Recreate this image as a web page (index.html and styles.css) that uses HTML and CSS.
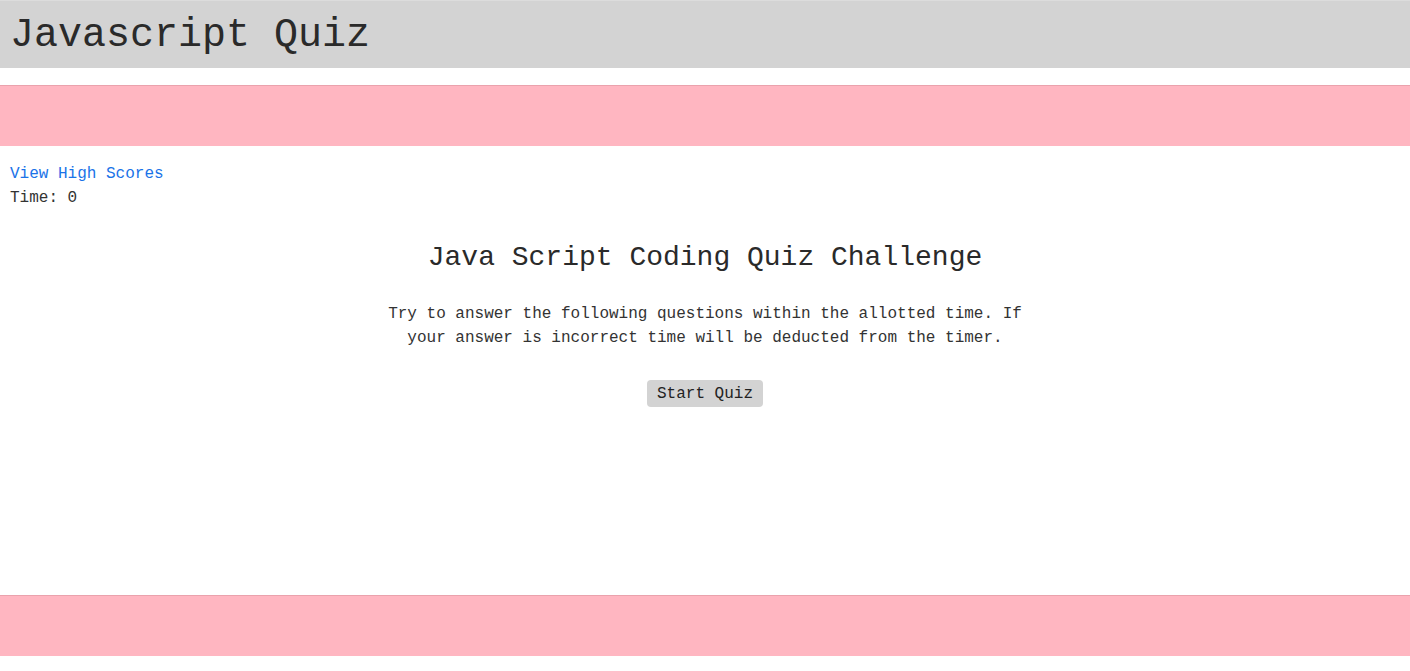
FILE: index.html
```html
<!DOCTYPE html>
<html lang="en">
<head>
<meta charset="utf-8">
<title>Javascript Quiz</title>
<link rel="stylesheet" href="styles.css">
</head>
<body>
<header class="site-header">
  <h1 class="site-title">Javascript Quiz</h1>
</header>
<div class="pink-bar"></div>
<nav class="status">
  <a class="scores-link" href="#">View High Scores</a>
  <div class="timer">Time: 0</div>
</nav>
<main class="quiz">
  <h2 class="quiz-title">Java Script Coding Quiz Challenge</h2>
  <p class="quiz-intro">Try to answer the following questions within the allotted time. If your answer is incorrect time will be deducted from the timer.</p>
  <button class="start-btn" type="button">Start Quiz</button>
</main>
<footer class="pink-bar"></footer>
</body>
</html>
```
FILE: styles.css
```css
html, body {
  margin: 0;
  padding: 0;
  background: #ffffff;
}
body {
  font-family: "Liberation Mono", "Courier New", monospace;
  color: #333333;
}
.site-header {
  height: 68px;
  background: #d3d3d3;
  border-top: 1px solid #dcdcdc;
  box-sizing: border-box;
  display: flex;
  align-items: center;
  padding-left: 10px;
  padding-top: 2px;
}
.site-title {
  margin: 0;
  font-size: 40px;
  font-weight: normal;
  line-height: 1;
  color: #2a2a2a;
}
.pink-bar {
  display: block;
  height: 61px;
  margin-top: 17px;
  background: #ffb6c1;
  border-top: 1px solid #eaa2ad;
  box-sizing: border-box;
}
.status {
  padding: 16px 10px 0;
  font-size: 16px;
  line-height: 24px;
}
.scores-link {
  color: #1a73e8;
  text-decoration: none;
}
.timer {
  color: #333333;
}
.quiz {
  display: flex;
  flex-direction: column;
  align-items: center;
  text-align: center;
  min-height: 368px;
  box-sizing: border-box;
  padding-top: 32px;
}
.quiz-title {
  margin: 0;
  font-size: 28px;
  font-weight: normal;
  line-height: 32px;
  color: #2a2a2a;
}
.quiz-intro {
  margin: 28px 0 0;
  max-width: 650px;
  font-size: 16px;
  line-height: 24px;
}
.start-btn {
  margin-top: 30px;
  font-family: inherit;
  font-size: 16px;
  line-height: 18px;
  color: #222222;
  background: #d3d3d3;
  border: none;
  border-radius: 4px;
  padding: 5px 10px 4px;
}
```
